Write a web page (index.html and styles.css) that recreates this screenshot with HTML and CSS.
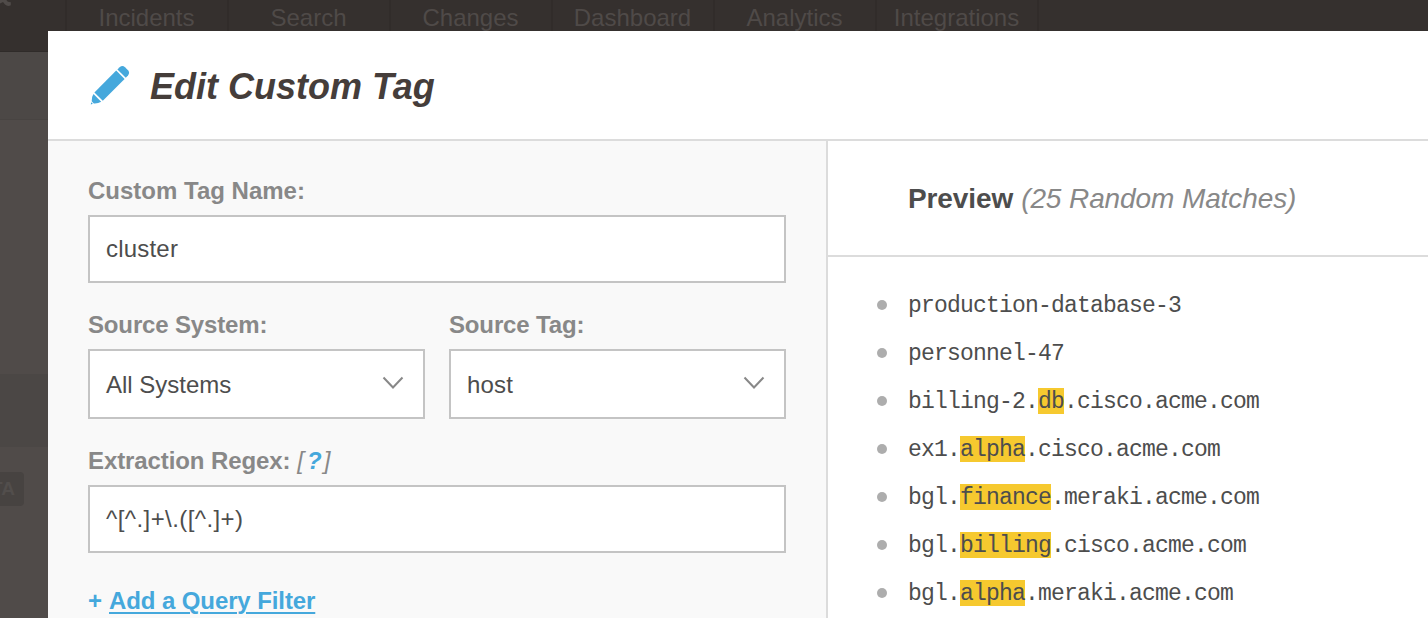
FILE: index.html
```html
<!DOCTYPE html>
<html lang="en">
<head>
<meta charset="utf-8">
<title>Edit Custom Tag</title>
<link rel="stylesheet" href="styles.css">
</head>
<body>
<div class="page">
  <nav class="nav">
    <div class="brand"><svg class="brand-mark" width="12" height="8" viewBox="0 0 12 8"><path d="M0 0H6.500C7 1.800 8.500 2.200 10.800 2.200V5.300Q7.500 6.800 5 4.500L3 2 0 3.500Z"/></svg></div>
    <a class="nav-item">Incidents</a>
    <a class="nav-item">Search</a>
    <a class="nav-item">Changes</a>
    <a class="nav-item">Dashboard</a>
    <a class="nav-item">Analytics</a>
    <a class="nav-item">Integrations</a>
  </nav>
  <aside class="sidebar">
    <div class="side-head"></div>
    <div class="side-body"></div>
    <div class="side-active"></div>
    <div class="side-beta"><span class="beta">BETA</span></div>
  </aside>
</div>

<section class="modal">
  <header class="modal-header">
    <svg class="pencil" width="40" height="40" viewBox="0 0 40 40">
      <path d="M27.400 3.400 29.600 1.200Q32.400-1.200 35 1.200L38 4.200Q40.200 6.800 38 9.600L35.800 11.800Z"/>
      <path d="M26.200 4.600 34.600 13 12.800 34.800 4.400 26.400Z"/>
      <path d="M3.500 28 11.200 35.700Q8 37.700 3.800 37.400L1.700 35.300Q1.400 31 3.500 28Z"/>
      <path d="M1.200 36.200 2.800 37.800 .800 38.500Z"/>
    </svg>
    <h1 class="title">Edit Custom Tag</h1>
  </header>
  <div class="modal-body">
    <form class="editor">
      <div class="field">
        <label class="label"><span>Custom Tag Name:</span></label>
        <div class="control input"><span class="value">cluster</span></div>
      </div>
      <div class="field-row">
        <div class="field">
          <label class="label tight"><span>Source System:</span></label>
          <div class="control select"><span>All Systems</span>
            <svg class="chevron" width="22" height="14" viewBox="0 0 22 14"><path d="M1.500 1.500 11 11.500 20.500 1.500"/></svg></div>
        </div>
        <div class="field">
          <label class="label tight"><span>Source Tag:</span></label>
          <div class="control select"><span class="value">host</span>
            <svg class="chevron" width="22" height="14" viewBox="0 0 22 14"><path d="M1.500 1.500 11 11.500 20.500 1.500"/></svg></div>
        </div>
      </div>
      <div class="field">
        <label class="label"><span class="regex-label">Extraction Regex:</span><span class="help">[<b>?</b>]</span></label>
        <div class="control input"><span class="expression">^[^.]+\.([^.]+)</span></div>
      </div>
      <div class="add"><span>+</span><a class="add-link">Add a Query Filter</a></div>
    </form>
    <section class="preview">
      <h2 class="preview-header"><b>Preview</b><span class="count">(25 Random Matches)</span></h2>
      <ul class="matches">
        <li>production-database-3</li>
        <li>personnel-47</li>
        <li>billing-2.<mark>db</mark>.cisco.acme.com</li>
        <li>ex1.<mark>alpha</mark>.cisco.acme.com</li>
        <li>bgl.<mark>finance</mark>.meraki.acme.com</li>
        <li>bgl.<mark>billing</mark>.cisco.acme.com</li>
        <li>bgl.<mark>alpha</mark>.meraki.acme.com</li>
      </ul>
    </section>
  </div>
</section>
</body>
</html>
```
FILE: styles.css
```css
* { box-sizing: border-box; }
body {
  margin: 0;
  height: 618px;
  overflow: hidden;
  position: relative;
  background: #504b49;
  font-family: "Liberation Sans", Arial, sans-serif;
  font-size: 24px;
  color: #4d4d4d;
}
.nav { display: flex; height: 52px; background: #35302e; border-bottom: 1px solid #2f2b29; }
.brand { width: 67px; flex: none; border-right: 2px solid #312c2a; }
.brand-mark { display: block; fill: #504b49; }
.nav-item {
  width: 162px;
  height: 52px;
  padding-right: 1px;
  line-height: 36px;
  text-align: center;
  color: #4f4a48;
  border-right: 2px solid #312c2a;
  white-space: nowrap;
}
.sidebar { width: 48px; }
.side-head { height: 68px; background: #4c4846; border-bottom: 1px solid #484442; }
.side-body { height: 254px; }
.side-active { height: 73px; background: #4b4745; }
.side-beta { display: flex; justify-content: flex-end; padding: 25px 24px 0 0; }
.beta {
  height: 34px;
  padding: 0 9px;
  border-radius: 4px;
  background: #474341;
  color: #524e4c;
  font-size: 19px;
  font-weight: bold;
  line-height: 34px;
}
.modal {
  position: absolute;
  left: 48px;
  top: 31px;
  right: 0;
  bottom: 0;
  background: #fff;
  display: flex;
  flex-direction: column;
}
.modal-header {
  flex: none;
  height: 110px;
  border-bottom: 2px solid #dcdcdc;
  display: flex;
  padding: 35px 0 0 42px;
}
.pencil { fill: #45a8dc; flex: none; }
.title {
  margin: 0 0 0 20px;
  font-size: 36px;
  line-height: 42px;
  font-style: italic;
  font-weight: bold;
  color: #453d3a;
  white-space: nowrap;
}
.modal-body { flex: 1; min-height: 0; display: flex; }
.editor {
  flex: none;
  width: 780px;
  padding: 35px 40px 0;
  background: #f9f9f9;
  border-right: 2px solid #dcdcdc;
}
.field { flex: 1; margin-bottom: 27px; }
.field-row { display: flex; gap: 24px; }
.field-row + .field { margin-bottom: 32px; }
.label {
  display: flex;
  height: 39px;
  line-height: 30px;
  font-weight: bold;
  color: #888;
  white-space: nowrap;
}
.tight { letter-spacing: -.15px; }
.regex-label { letter-spacing: -.1px; }
.help { margin-left: 7px; font-weight: normal; font-style: italic; }
.help b { margin: 0 2px 0 3px; color: #45a8dc; }
.control {
  display: flex;
  align-items: center;
  justify-content: space-between;
  height: 68px;
  padding: 0 16px;
  border: 2px solid #c4c4c4;
  background: #fff;
  white-space: nowrap;
}
.value { letter-spacing: .2px; }
.expression { letter-spacing: .42px; }
.select { height: 70px; padding: 2px 19px 0 16px; }
.chevron { fill: none; stroke: #888; stroke-width: 2; margin-top: -4px; }
.add { display: flex; gap: 7px; line-height: 32px; font-weight: bold; color: #45a8dc; }
.add-link {
  letter-spacing: -.1px;
  text-decoration: underline;
  text-decoration-thickness: 1.500px;
  text-underline-offset: 3px;
  white-space: nowrap;
}
.preview { flex: 1; min-width: 0; }
.preview-header {
  display: flex;
  margin: 0;
  height: 116px;
  padding: 1px 0 0 80px;
  border-bottom: 2px solid #dcdcdc;
  align-items: center;
  gap: 8px;
  font-size: 28px;
  font-weight: normal;
  letter-spacing: -.1px;
  white-space: nowrap;
}
.count { font-style: italic; color: #888; }
.matches {
  margin: 0;
  padding: 24px 0 0 49px;
  list-style: none;
  font-family: "Liberation Mono", monospace;
  font-size: 23px;
  letter-spacing: -.802px;
}
.matches li { display: flex; align-items: center; height: 48px; line-height: 30px; padding-top: 2px; white-space: pre; }
.matches li::before { content: ""; width: 10px; height: 10px; margin: -2px 21px 0 0; border-radius: 50%; background: #adadad; }
mark { height: 26px; line-height: 28px; margin-top: -2px; background: #f6c92f; color: inherit; }
```
